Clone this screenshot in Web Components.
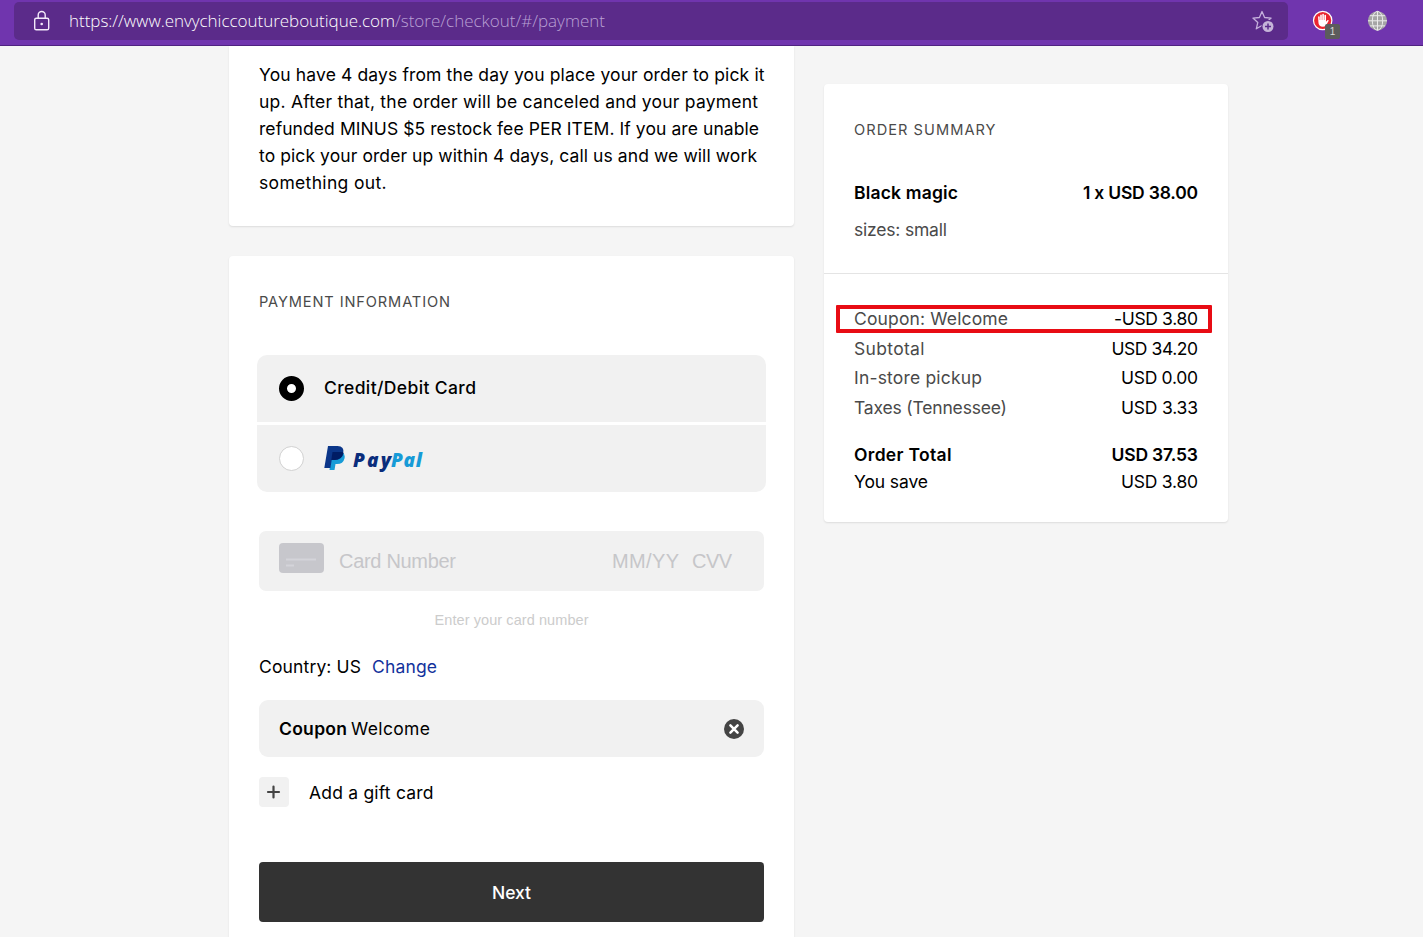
<!DOCTYPE html>
<html lang="en">
<head>
<meta charset="utf-8">
<title>Checkout</title>
<style>
  body {
    margin: 0;
    height: 937px;
    overflow: hidden;
    background: #f5f5f5;
    color: #000;
    font: 17.5px/27px Inter, "Liberation Sans", sans-serif;
  }
</style>
</head>
<body>
<checkout-page></checkout-page>

<script>
// Text set to a given measure by adjusting its tracking
class TrackText extends HTMLElement {
  connectedCallback() {
    this.attachShadow({ mode: 'open' });
    this.shadowRoot.innerHTML = `
      <style>
        :host { display: inline-block; white-space: nowrap; }
        span { display: inline-block; }
      </style>
      <span><slot></slot></span>
    `;
    const span = this.shadowRoot.querySelector('span');
    const gaps = this.textContent.length - 1;
    const spacing = (Number(this.getAttribute('measure')) - span.getBoundingClientRect().width) / gaps;
    span.style.letterSpacing = spacing + 'px';
    span.style.marginRight = -spacing + 'px';
  }
}

class BrowserBar extends HTMLElement {
  connectedCallback() {
    this.attachShadow({ mode: 'open' });
    this.shadowRoot.innerHTML = `
      <style>
        :host {
          display: flex;
          box-sizing: border-box;
          height: 46px;
          padding: 2px 35px 5px 14px;
          background: #7035ae;
          border-bottom: 1px solid #4f2380;
        }
        .address {
          display: flex;
          align-items: center;
          box-sizing: border-box;
          width: 1274px;
          height: 38px;
          padding: 0 13px 0 18px;
          border-radius: 5px;
          background: #5b2b8a;
          color: #fff;
          font: 300 17px/38px "Open Sans", "Noto Sans", sans-serif;
        }
        .lock { margin-right: 18px; }
        .path { color: #b9a0d4; }
        .star { margin-left: auto; }
        .extension { position: relative; margin: 8px 0 0 24px; }
        .badge {
          position: absolute;
          left: 13px;
          top: 14px;
          width: 15px;
          height: 15px;
          border-radius: 2px;
          background: #5c5c5c;
          color: #ddd;
          font: 10px/16px "Liberation Sans", sans-serif;
          text-align: center;
        }
        .globe { margin: 8px 0 0 34px; }
        svg { display: block; flex: none; }
      </style>
      <div class="address">
        <svg class="lock" width="19" height="22" viewBox="0 0 19 22" fill="none" stroke="#f3eafa" stroke-width="1.4">
          <rect x="2.7" y="8.2" width="14" height="11.6" rx="1.6"/>
          <path d="M6.2 8V5a3.5 3.5 0 0 1 7 0v3"/>
          <circle cx="9.7" cy="14" r="1.3" fill="#f3eafa" stroke="none"/>
        </svg>
        <track-text measure="326">https://www.envychiccoutureboutique.com</track-text><track-text class="path" measure="210">/store/checkout/#/payment</track-text>
        <svg class="star" width="24" height="24" viewBox="0 0 24 24">
          <path d="M11 2.5l2.6 6 6.5.6-4.9 4.3 1.5 6.4L11 16.5l-5.7 3.3 1.5-6.4-4.9-4.3 6.5-.6z" fill="none" stroke="#c5b0dc" stroke-width="1.3" stroke-linejoin="round"/>
          <circle cx="17" cy="17.500" r="6.6" fill="#5b2b8a"/>
          <circle cx="17" cy="17.500" r="5.500" fill="#c5b4d8"/>
          <path d="M14 17.500h6M17 14.500v6" stroke="#5b2b8a" stroke-width="1.500"/>
        </svg>
      </div>
      <div class="extension">
        <svg width="21" height="21" viewBox="0 0 21 21">
          <circle cx="10.7" cy="10.5" r="9.2" fill="#ea2530" stroke="#fff" stroke-width="1.2"/>
          <path d="M6.100 7q0-.8.8-.8t.8.8v3h.500V5.200q0-.8.800-.8t.8.8V10h.500V4.600q0-.8.800-.8t.8.8V10h.500V5.600q0-.8.800-.8t.8.8v6.200l1.300-1.500q.9-.6 1.500.1l-2.500 4.600q-1 1.700-3.200 1.700-4.700 0-4.700-4.700z" fill="#fff"/>
        </svg>
        <span class="badge">1</span>
      </div>
      <svg class="globe" width="21" height="21" viewBox="0 0 21 21">
        <circle cx="10.5" cy="10.8" r="9.6" fill="#a5a5a5"/>
        <g fill="none" stroke="#ebebeb" stroke-width="1">
          <ellipse cx="10.5" cy="10.8" rx="5.2" ry="9.5"/>
          <path d="M10.5 1.2v19.2M1 10.8h19M2.8 5.7h15.4M2.8 15.9h15.4"/>
        </g>
      </svg>
    `;
  }
}

class CheckoutCard extends HTMLElement {
  connectedCallback() {
    this.attachShadow({ mode: 'open' });
    this.shadowRoot.innerHTML = `
      <style>
        :host {
          display: block;
          box-sizing: border-box;
          padding: 30px;
          border-radius: 4px;
          background: #fff;
          box-shadow: 0 1px 2px rgba(0, 0, 0, .1);
        }
        .title {
          height: 29px;
          padding-top: 1px;
          color: #4a4a4a;
          font-size: 14.6px;
          line-height: 30px;
        }
      </style>
      ${this.hasAttribute('heading') ? `<div class="title"><track-text measure="${this.getAttribute('measure')}">${this.getAttribute('heading')}</track-text></div>` : ''}
      <slot></slot>
    `;
  }
}

class PaymentOption extends HTMLElement {
  connectedCallback() {
    const fill = this.hasAttribute('checked')
      ? '<circle cx="12.5" cy="12.5" r="8.5" fill="#fff" stroke="#000" stroke-width="8"/>'
      : '<circle cx="12.5" cy="12.5" r="12" fill="#fff" stroke="#d0d0d0"/>';
    this.attachShadow({ mode: 'open' });
    this.shadowRoot.innerHTML = `
      <style>
        :host {
          display: flex;
          align-items: center;
          gap: 20px;
          height: 67px;
          padding-left: 22px;
          background: #f1f1f1;
          font-weight: 500;
        }
        ::slotted(*) { margin-bottom: 2px; }
      </style>
      <svg width="25" height="25" viewBox="0 0 25 25">${fill}</svg>
      <slot></slot>
    `;
  }
}

class PaypalLogo extends HTMLElement {
  connectedCallback() {
    this.attachShadow({ mode: 'open' });
    this.shadowRoot.innerHTML = `
      <style>
        :host {
          display: flex;
          align-items: center;
          gap: 8px;
          color: #0a2d7c;
          font: italic 800 19px/26px "Open Sans", "Noto Sans", sans-serif;
        }
        .pal { color: #179bd7; }
        div { padding-top: 5px; }
      </style>
      <svg width="21" height="26" viewBox="0 0 21 26">
        <path d="M8 7h10q3.5 2 2.5 6.5Q19.2 19 13 19h-1.5l-1 6H5.5z" fill="#179bd7"/>
        <path d="M4 1h9.5q7.2.4 5.8 7.3Q18 15 10.5 15H7.7l-1.3 8H.3z" fill="#0b3689"/>
        <path d="M8.500 7h9.800q1 .4 1 1.300Q18 15 10.500 15H7.300z" fill="#001c64"/>
      </svg>
      <div><track-text measure="38">Pay</track-text><track-text class="pal" measure="31">Pal</track-text></div>
    `;
  }
}

class CardField extends HTMLElement {
  connectedCallback() {
    this.attachShadow({ mode: 'open' });
    this.shadowRoot.innerHTML = `
      <style>
        :host {
          display: flex;
          align-items: center;
          box-sizing: border-box;
          height: 60px;
          padding: 0 32px 0 20px;
          border-radius: 7px;
          background: #f1f1f1;
          color: #c6c6c9;
          font: 20px/30px "Liberation Sans", Arial, sans-serif;
        }
        svg { margin: 0 15px 6px 0; }
        .expiry { margin: 0 13px 0 auto; }
      </style>
      <svg width="45" height="30" viewBox="0 0 45 30">
        <rect width="45" height="30" rx="4" fill="#c7c7cc"/>
        <path d="M7 16.5h30M7 22.5h8" stroke="#d4d4d9" stroke-width="2"/>
      </svg>
      <track-text measure="117">Card Number</track-text>
      <track-text class="expiry" measure="67">MM/YY</track-text>
      <track-text measure="40">CVV</track-text>
    `;
  }
}

class CouponField extends HTMLElement {
  connectedCallback() {
    this.attachShadow({ mode: 'open' });
    this.shadowRoot.innerHTML = `
      <style>
        :host {
          display: flex;
          align-items: center;
          height: 57px;
          padding: 0 20px;
          border-radius: 9px;
          background: #f1f1f1;
        }
        b { font-weight: 600; margin-right: 4px; }
        svg { margin-left: auto; }
      </style>
      <b><track-text measure="68">Coupon</track-text></b>
      <track-text measure="79">Welcome</track-text>
      <svg width="20" height="20" viewBox="0 0 20 20">
        <circle cx="10" cy="10" r="10" fill="#444"/>
        <path d="M6.4 6.4l7.2 7.2M13.6 6.4l-7.2 7.2" stroke="#fff" stroke-width="2.5" stroke-linecap="round"/>
      </svg>
    `;
  }
}

class GiftCardLink extends HTMLElement {
  connectedCallback() {
    this.attachShadow({ mode: 'open' });
    this.shadowRoot.innerHTML = `
      <style>
        :host { display: flex; align-items: center; gap: 20px; height: 30px; }
      </style>
      <svg width="30" height="30" viewBox="0 0 30 30">
        <rect width="30" height="30" rx="4" fill="#f1f1f1"/>
        <path d="M9 15h11M14.5 9.5v11" stroke="#444" stroke-width="2.2" stroke-linecap="round"/>
      </svg>
      <slot></slot>
    `;
  }
}

class NextButton extends HTMLElement {
  connectedCallback() {
    this.attachShadow({ mode: 'open' });
    this.shadowRoot.innerHTML = `
      <style>
        :host {
          display: flex;
          align-items: center;
          justify-content: center;
          height: 60px;
          border-radius: 4px;
          background: #333;
          color: #fff;
          font-weight: 500;
        }
      </style>
      <slot></slot>
    `;
  }
}

class SummaryRow extends HTMLElement {
  connectedCallback() {
    const attr = name => this.getAttribute(name);
    this.attachShadow({ mode: 'open' });
    this.shadowRoot.innerHTML = `
      <style>
        :host {
          position: relative;
          display: flex;
          align-items: center;
          justify-content: space-between;
          height: 29.6px;
        }
        .label { color: #4a4a4a; }
        :host([strong]) { font-weight: 600; }
        :host([strong]) .label, :host([dark]) .label { color: #000; }
        :host([marked])::after {
          content: "";
          position: absolute;
          inset: 1px -14px 1px -18px;
          border: 4px solid #e80c14;
          border-radius: 1px;
        }
      </style>
      <track-text class="label" measure="${attr('label-measure')}">${attr('label')}</track-text>
      ${attr('amount') ? `<track-text measure="${attr('amount-measure')}">${attr('amount')}</track-text>` : ''}
    `;
  }
}

class CheckoutPage extends HTMLElement {
  connectedCallback() {
    this.attachShadow({ mode: 'open' });
    this.shadowRoot.innerHTML = `
      <style>
        :host { display: block; }
        main {
          display: grid;
          grid-template-columns: 565px 404px;
          column-gap: 30px;
          align-items: start;
          padding-left: 229px;
        }
        .left { display: grid; grid-template-columns: 100%; row-gap: 30px; }
        .pickup {
          height: 180px;
          padding-top: 15px;
          border-radius: 0 0 4px 4px;
        }
        .line { height: 27px; }
        .payment { height: 720px; }
        .options {
          display: grid;
          row-gap: 3px;
          margin: 39px -2px 39px;
          border-radius: 10px;
          overflow: hidden;
        }
        .hint {
          height: 20px;
          margin: 19px 0 23px;
          color: #ccc;
          font: 14.5px/20px "Liberation Sans", sans-serif;
          text-align: center;
        }
        .country { display: flex; gap: 11px; height: 27px; margin-bottom: 20px; }
        .change { color: #12329c; }
        gift-card-link { margin: 20px 0 55px; }
        .summary { margin-top: 38px; height: 438px; }
        .item { padding: 34px 0 24px; height: 71px; }
        .item > summary-row:last-child { margin-top: 7px; }
        .totals {
          margin: 0 -30px;
          padding: 30px 30px 0;
          border-top: 1px solid #e4e4e4;
        }
        .total { margin-top: 17px; }
        .saved { margin-top: -2px; }
      </style>
      <browser-bar></browser-bar>
      <main>
        <div class="left">
          <checkout-card class="pickup">
            <div class="line"><track-text measure="505.5">You have 4 days from the day you place your order to pick it</track-text></div>
            <div class="line"><track-text measure="499">up. After that, the order will be canceled and your payment</track-text></div>
            <div class="line"><track-text measure="500">refunded MINUS $5 restock fee PER ITEM. If you are unable</track-text></div>
            <div class="line"><track-text measure="498">to pick your order up within 4 days, call us and we will work</track-text></div>
            <div class="line"><track-text measure="127.5">something out.</track-text></div>
          </checkout-card>
          <checkout-card class="payment" heading="PAYMENT INFORMATION" measure="191">
            <div class="options">
              <payment-option checked><track-text measure="152">Credit/Debit Card</track-text></payment-option>
              <payment-option><paypal-logo></paypal-logo></payment-option>
            </div>
            <card-field></card-field>
            <div class="hint"><track-text measure="154">Enter your card number</track-text></div>
            <div class="country">
              <track-text measure="102">Country: US</track-text>
              <track-text class="change" measure="65">Change</track-text>
            </div>
            <coupon-field></coupon-field>
            <gift-card-link><track-text measure="124.5">Add a gift card</track-text></gift-card-link>
            <next-button><track-text measure="39">Next</track-text></next-button>
          </checkout-card>
        </div>
        <checkout-card class="summary" heading="ORDER SUMMARY" measure="141.5">
          <div class="item">
            <summary-row strong label="Black magic" label-measure="104" amount="1 x USD 38.00" amount-measure="115"></summary-row>
            <summary-row label="sizes: small" label-measure="93"></summary-row>
          </div>
          <div class="totals">
            <summary-row marked label="Coupon: Welcome" label-measure="154" amount="-USD 3.80" amount-measure="84"></summary-row>
            <summary-row label="Subtotal" label-measure="70.5" amount="USD 34.20" amount-measure="86.5"></summary-row>
            <summary-row label="In-store pickup" label-measure="128" amount="USD 0.00" amount-measure="77"></summary-row>
            <summary-row label="Taxes (Tennessee)" label-measure="153" amount="USD 3.33" amount-measure="77"></summary-row>
            <summary-row class="total" strong label="Order Total" label-measure="97.5" amount="USD 37.53" amount-measure="86.5"></summary-row>
            <summary-row class="saved" dark label="You save" label-measure="74" amount="USD 3.80" amount-measure="77"></summary-row>
          </div>
        </checkout-card>
      </main>
    `;
  }
}

customElements.define('browser-bar', BrowserBar);
customElements.define('checkout-card', CheckoutCard);
customElements.define('payment-option', PaymentOption);
customElements.define('paypal-logo', PaypalLogo);
customElements.define('card-field', CardField);
customElements.define('coupon-field', CouponField);
customElements.define('gift-card-link', GiftCardLink);
customElements.define('next-button', NextButton);
customElements.define('summary-row', SummaryRow);
customElements.define('checkout-page', CheckoutPage);
// last, so that every text is measured with its final font
customElements.define('track-text', TrackText);
</script>
</body>
</html>
